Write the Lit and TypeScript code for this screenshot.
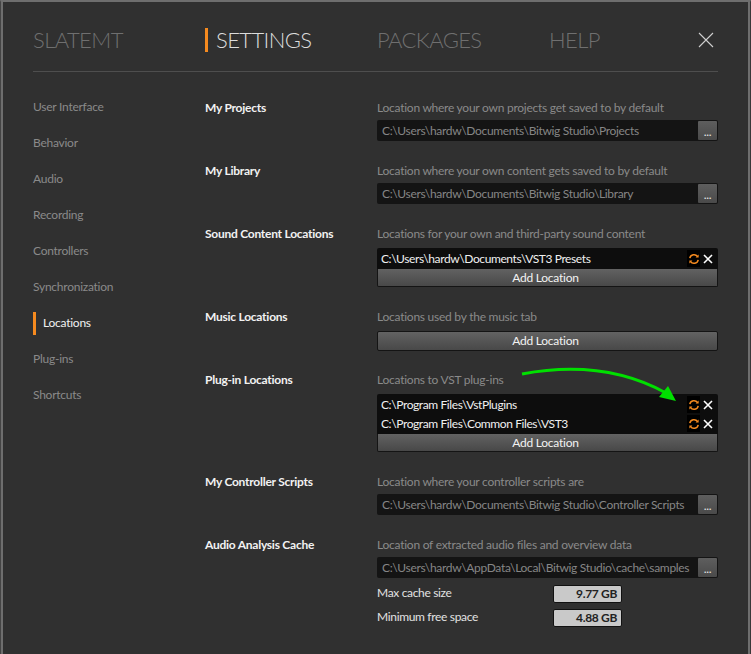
import { css, html, LitElement } from "lit";
import { customElement } from "lit/decorators.js";

const NAV = [
  "User Interface",
  "Behavior",
  "Audio",
  "Recording",
  "Controllers",
  "Synchronization",
  "Locations",
  "Plug-ins",
  "Shortcuts",
];

const refreshIcon = html`<svg viewBox="0 0 12 12" width="12" height="12" fill="none" stroke="#f58a1f" stroke-width="1.5">
  <path d="M1.8 5.2A4.3 4.3 0 0 1 9.6 3.6" />
  <path d="M10.2 6.8A4.3 4.3 0 0 1 2.4 8.4" />
  <path d="M10.6 1.4v3h-3z" fill="#f58a1f" stroke="none" />
  <path d="M1.4 10.6v-3h3z" fill="#f58a1f" stroke="none" />
</svg>`;

const crossIcon = html`<svg viewBox="0 0 10 10" width="10" height="10" stroke="#fff" stroke-width="1.6">
  <path d="M1 1l8 8M9 1l-8 8" />
</svg>`;

@customElement("app-root")
export class AppRoot extends LitElement {
  static styles = css`
    :host {
      display: block;
      position: relative;
      width: 751px;
      height: 654px;
      box-sizing: border-box;
      overflow: hidden;
      background: #303030;
      border-top: 2px solid #6e6e6e;
      border-left: 1px solid #444;
      border-right: 1px solid #383838;
      box-shadow: inset 2px 0 #6e6e6e, inset -2px 0 #6e6e6e;
      font: 12px/16px Lato, sans-serif;
      letter-spacing: -0.25px;
      color: #8a8a8a;
    }

    .tabs {
      display: grid;
      grid-template-columns: 172px 172px 172px 1fr;
      align-items: center;
      height: 70px;
      padding-top: 6px;
      margin: 0 32px;
      border-bottom: 1px solid #4e4e4e;
      box-sizing: border-box;
      font-size: 22px;
      letter-spacing: -0.6px;
      font-weight: 300;
      color: #6f6f6f;
    }

    .tab {
      display: flex;
      align-items: center;
      height: 24px;
    }

    .tab.active {
      color: #dcdcdc;
    }

    .tab.active::before {
      content: "";
      width: 3px;
      height: 24px;
      margin-right: 8px;
      background: #f58a1f;
    }

    .tab-last {
      display: flex;
      justify-content: space-between;
      align-items: center;
    }

    .close {
      display: block;
      margin-right: 4px;
    }

    .body {
      display: grid;
      grid-template-columns: 172px minmax(0, 1fr);
      margin: 0 32px;
      padding-top: 23px;
    }

    .nav {
      display: flex;
      flex-direction: column;
      gap: 12px;
    }

    .nav-item {
      display: flex;
      align-items: center;
      height: 24px;
    }

    .nav-item.active {
      color: #f0f0f0;
    }

    .nav-item.active::before {
      content: "";
      width: 3px;
      height: 23px;
      margin-right: 7px;
      background: #f58a1f;
    }

    .sections {
      padding-top: 4px;
    }

    .section {
      display: grid;
      grid-template-columns: 172px minmax(0, 1fr);
    }

    .label {
      font-weight: 700;
      color: #f2f2f2;
      line-height: 16px;
      padding-top: 1px;
      letter-spacing: -0.25px;
    }

    .desc {
      height: 22px;
      line-height: 16px;
      padding-top: 1px;
      box-sizing: border-box;
    }

    .field {
      display: flex;
      height: 21px;
      margin-top: -1px;
      background: #141414;
      border-radius: 2px;
      color: #868686;
      letter-spacing: -0.33px;
    }

    .field-path {
      flex: 1;
      min-width: 0;
      padding-left: 5px;
      line-height: 21px;
      white-space: nowrap;
      overflow: hidden;
    }

    .browse {
      width: 19px;
      margin: 1px;
      border-radius: 1px;
      background: linear-gradient(#5e5e5e, #4a4a4a);
      color: #e6e6e6;
      text-align: center;
      line-height: 22px;
      font-size: 12px;
    }

    .list {
      margin-top: 1px;
      padding: 1px 0;
      background: #0d0d0d;
      border-radius: 2px 2px 0 0;
    }

    .list-row {
      display: flex;
      align-items: center;
      height: 19px;
      padding-left: 4px;
      color: #f0f0f0;
      letter-spacing: -0.4px;
    }

    .list-path {
      flex: 1;
    }

    .icon-refresh {
      display: flex;
      align-items: center;
      justify-content: center;
      width: 13px;
      height: 17px;
      background: #000;
      margin-right: 3px;
    }

    .icon-cross {
      display: flex;
      width: 15px;
    }

    .add {
      height: 20px;
      margin-top: 1px;
      padding-right: 4px;
      box-sizing: border-box;
      border: 1px solid #141414;
      border-radius: 2px;
      background: linear-gradient(#626262, #484848);
      color: #f2f2f2;
      text-align: center;
      line-height: 18px;
    }

    .list + .add {
      height: 18px;
      margin-top: 0;
      border-top: 0;
      border-radius: 0 0 2px 2px;
      line-height: 17px;
    }

    .stat {
      display: grid;
      grid-template-columns: 176px 69px;
      align-items: center;
      height: 18px;
      margin-top: 6px;
      color: #e2e2e2;
      letter-spacing: -0.33px;
    }

    .field + .stat {
      margin-top: 7px;
    }

    .stat-name {
      padding-bottom: 2px;
    }

    .stat-value {
      height: 18px;
      box-sizing: border-box;
      border: 1px solid #111;
      border-radius: 2px;
      background: #c9c9c9;
      color: #222;
      font-weight: 700;
      text-align: right;
      padding-right: 4px;
      line-height: 16px;
    }

    .arrow {
      position: absolute;
      left: -1px;
      top: -2px;
      pointer-events: none;
    }
  `;

  private field(path: string) {
    return html`<div class="field">
      <div class="field-path">${path}</div>
      <div class="browse">...</div>
    </div>`;
  }

  private list(paths: string[]) {
    return html`<div class="list">
        ${paths.map(
          (p) => html`<div class="list-row">
            <span class="list-path">${p}</span>
            <span class="icon-refresh">${refreshIcon}</span>
            <span class="icon-cross">${crossIcon}</span>
          </div>`,
        )}
      </div>
      <div class="add">Add Location</div>`;
  }

  private stat(name: string, value: string) {
    return html`<div class="stat">
      <span class="stat-name">${name}</span>
      <span class="stat-value">${value}</span>
    </div>`;
  }

  private section(label: string, desc: string, content: unknown, height: number) {
    return html`<div class="section" style="height:${height}px">
      <div class="label">${label}</div>
      <div>
        <div class="desc">${desc}</div>
        ${content}
      </div>
    </div>`;
  }

  render() {
    return html`
      <div class="tabs">
        <div class="tab">SLATEMT</div>
        <div class="tab active">SETTINGS</div>
        <div class="tab">PACKAGES</div>
        <div class="tab-last">
          <div class="tab">HELP</div>
          <svg class="close" viewBox="0 0 16 16" width="16" height="16" stroke="#d0d0d0" stroke-width="1.1">
            <path d="M1 1l14 14M15 1L1 15" />
          </svg>
        </div>
      </div>
      <div class="body">
        <div class="nav">
          ${NAV.map(
            (n) => html`<div class="nav-item ${n === "Locations" ? "active" : ""}">${n}</div>`,
          )}
        </div>
        <div class="sections">
          ${this.section(
            "My Projects",
            "Location where your own projects get saved to by default",
            this.field("C:\\Users\\hardw\\Documents\\Bitwig Studio\\Projects"),
            63,
          )}
          ${this.section(
            "My Library",
            "Location where your own content gets saved to by default",
            this.field("C:\\Users\\hardw\\Documents\\Bitwig Studio\\Library"),
            63,
          )}
          ${this.section(
            "Sound Content Locations",
            "Locations for your own and third-party sound content",
            this.list(["C:\\Users\\hardw\\Documents\\VST3 Presets"]),
            83,
          )}
          ${this.section(
            "Music Locations",
            "Locations used by the music tab",
            html`<div class="add">Add Location</div>`,
            63,
          )}
          ${this.section(
            "Plug-in Locations",
            "Locations to VST plug-ins",
            this.list(["C:\\Program Files\\VstPlugins", "C:\\Program Files\\Common Files\\VST3"]),
            102,
          )}
          ${this.section(
            "My Controller Scripts",
            "Location where your controller scripts are",
            this.field("C:\\Users\\hardw\\Documents\\Bitwig Studio\\Controller Scripts"),
            63,
          )}
          ${this.section(
            "Audio Analysis Cache",
            "Location of extracted audio files and overview data",
            html`${this.field("C:\\Users\\hardw\\AppData\\Local\\Bitwig Studio\\cache\\samples")}
            ${this.stat("Max cache size", "9.77 GB")} ${this.stat("Minimum free space", "4.88 GB")}`,
            100,
          )}
        </div>
      </div>
      <svg class="arrow" width="751" height="654" viewBox="0 0 751 654">
        <path d="M522 374C565 366 617 366 666 393" fill="none" stroke="#00e000" stroke-width="3" />
        <path d="M676 401L659 397L668 386Z" fill="#00e000" />
      </svg>
    `;
  }
}
